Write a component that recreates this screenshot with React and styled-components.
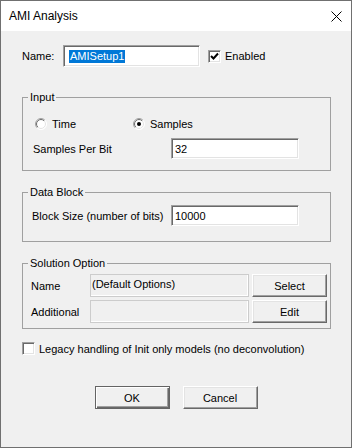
import styled, { createGlobalStyle } from 'styled-components';

const Global = createGlobalStyle`
    html, body {
        margin: 0;
        padding: 0;
        background: #f0f0f0;
    }
    * {
        box-sizing: border-box;
    }
`

const Window = styled.div`
    width: 352px;
    height: 448px;
    display: flex;
    flex-direction: column;
    border: 1px solid #707070;
    background: #f0f0f0;
    font-family: "Liberation Sans", Arial, sans-serif;
    font-size: 11px;
    color: #000;
`
const TitleBar = styled.div`
    height: 30px;
    display: flex;
    align-items: center;
    justify-content: space-between;
    padding: 0 9px 0 8px;
    background: #fff;
    font-size: 12px;
`
const Body = styled.div`
    flex: 1;
    display: flex;
    flex-direction: column;
    padding: 0 20px 0 21px;
`
const Row = styled.div`
    display: flex;
    align-items: center;
    margin-top: ${(p) => p.mt || 0}px;
    padding-left: ${(p) => p.pl || 0}px;
`
const Label = styled.span`
    width: ${(p) => (p.w ? `${p.w}px` : 'auto')};
    flex-shrink: 0;
`
const Edit = styled.div`
    width: ${(p) => p.w}px;
    height: ${(p) => p.h}px;
    display: flex;
    align-items: center;
    padding-left: ${(p) => p.pad || 3}px;
    background: #fff;
    border-top: 1px solid #a0a0a0;
    border-left: 1px solid #a0a0a0;
    border-bottom: 1px solid #fff;
    border-right: 1px solid #fff;
    box-shadow: inset 1px 1px 0 #696969, inset -1px -1px 0 #e3e3e3;
`
const Selected = styled.span`
    background: #0078d7;
    color: #fff;
    line-height: 13px;
    padding: 0 1px;
`
const Box = styled.span`
    width: 13px;
    height: 13px;
    flex-shrink: 0;
    display: flex;
    align-items: center;
    justify-content: center;
    margin-right: ${(p) => p.gap || 4}px;
    background: #fff;
    border-top: 1px solid #a0a0a0;
    border-left: 1px solid #a0a0a0;
    border-bottom: 1px solid #fff;
    border-right: 1px solid #fff;
    box-shadow: inset 1px 1px 0 #696969, inset -1px -1px 0 #e3e3e3;
`
const Group = styled.fieldset`
    margin: ${(p) => p.mt}px 0 0 0;
    padding: ${(p) => p.pad};
    border: 1px solid #a0a0a0;
    min-width: 0;
`
const Legend = styled.legend`
    margin-left: 5px;
    padding: 0 2px;
    line-height: 13px;
`
const Option = styled.label`
    display: flex;
    align-items: center;
    width: ${(p) => p.w}px;
    margin-top: ${(p) => p.dy || 0}px;
`
const ReadOnly = styled.div`
    width: 159px;
    height: 23px;
    padding: 3px 0 0 1px;
    border: 1px solid #cccccc;
    box-shadow: inset -1px -1px 0 #ffffff;
    background: #f0f0f0;
    color: #000;
`
const Button = styled.button`
    width: 75px;
    height: 23px;
    padding: 0;
    margin-left: ${(p) => p.ml || 0}px;
    font-family: inherit;
    font-size: 11px;
    color: #000;
    background: #f0f0f0;
    border: 1px solid;
    border-color: #fff #696969 #696969 #fff;
    box-shadow: inset -1px -1px 0 #a0a0a0, inset 1px 1px 0 #e3e3e3;
    ${(p) => p.primary && `
        border-color: #646464;
        box-shadow: inset 1px 1px 0 #fff, inset -1px -1px 0 #696969, inset -2px -2px 0 #a0a0a0;
    `}
`
const Buttons = styled.div`
    display: flex;
    justify-content: center;
    gap: 13px;
    margin-top: 31px;
    padding-right: 1px;
`

const Check = () => (
    <svg width="9" height="9" viewBox="0 0 9 9">
        <path d="M1 4 L3.5 6.5 L8 1.5" fill="none" stroke="#000" strokeWidth="2" />
    </svg>
)

const Radio = ({ on }) => (
    <svg width="12" height="12" viewBox="0 0 12 12" style={{ marginRight: 5, flexShrink: 0 }}>
        <defs>
            <linearGradient id="ro" x1="0" y1="0" x2="1" y2="1">
                <stop offset="0.45" stopColor="#a0a0a0" />
                <stop offset="0.55" stopColor="#ffffff" />
            </linearGradient>
            <linearGradient id="ri" x1="0" y1="0" x2="1" y2="1">
                <stop offset="0.45" stopColor="#696969" />
                <stop offset="0.55" stopColor="#e3e3e3" />
            </linearGradient>
        </defs>
        <circle cx="6" cy="6" r="5.5" fill="#fff" stroke="url(#ro)" strokeWidth="1" />
        <circle cx="6" cy="6" r="4.5" fill="#fff" stroke="url(#ri)" strokeWidth="1" />
        {on && <circle cx="6" cy="6" r="2" fill="#000" />}
    </svg>
)

const Close = () => (
    <svg width="11" height="11" viewBox="0 0 11 11">
        <path d="M0.5 0.5 L10.5 10.5 M10.5 0.5 L0.5 10.5" stroke="#000" strokeWidth="1" />
    </svg>
)

const App = () => {
    return (
        <Window>
            <Global />
            <TitleBar>
                <span>AMI Analysis</span>
                <Close />
            </TitleBar>
            <Body>
                <Row mt={14}>
                    <Label w={41}>Name:</Label>
                    <Edit w={137} h={22} pad={5}>
                        <Selected>AMISetup1</Selected>
                    </Edit>
                    <Row pl={8}>
                        <Box><Check /></Box>
                        <span>Enabled</span>
                    </Row>
                </Row>

                <Group mt={24} pad="0 0 11px 0">
                    <Legend>Input</Legend>
                    <Row mt={13} pl={12}>
                        <Option w={98} dy={1}><Radio />Time</Option>
                        <Option w={80}><Radio on />Samples</Option>
                    </Row>
                    <Row mt={8} pl={10}>
                        <Label w={138}>Samples Per Bit</Label>
                        <Edit w={128} h={21}>32</Edit>
                    </Row>
                </Group>

                <Group mt={15} pad="0 0 15px 0">
                    <Legend>Data Block</Legend>
                    <Row mt={6} pl={9}>
                        <Label w={139}>Block Size (number of bits)</Label>
                        <Edit w={128} h={21}>10000</Edit>
                    </Row>
                </Group>

                <Group mt={15} pad="0 0 5px 0">
                    <Legend>Solution Option</Legend>
                    <Row mt={4} pl={8}>
                        <Label w={59}>Name</Label>
                        <ReadOnly>(Default Options)</ReadOnly>
                        <Button ml={3}>Select</Button>
                    </Row>
                    <Row mt={3} pl={8}>
                        <Label w={59}>Additional</Label>
                        <ReadOnly />
                        <Button ml={3}>Edit</Button>
                    </Row>
                </Group>

                <Row mt={13}>
                    <Box gap={4} />
                    <span>Legacy handling of Init only models (no deconvolution)</span>
                </Row>

                <Buttons>
                    <Button primary>OK</Button>
                    <Button>Cancel</Button>
                </Buttons>
            </Body>
        </Window>
    )
}

export default App
